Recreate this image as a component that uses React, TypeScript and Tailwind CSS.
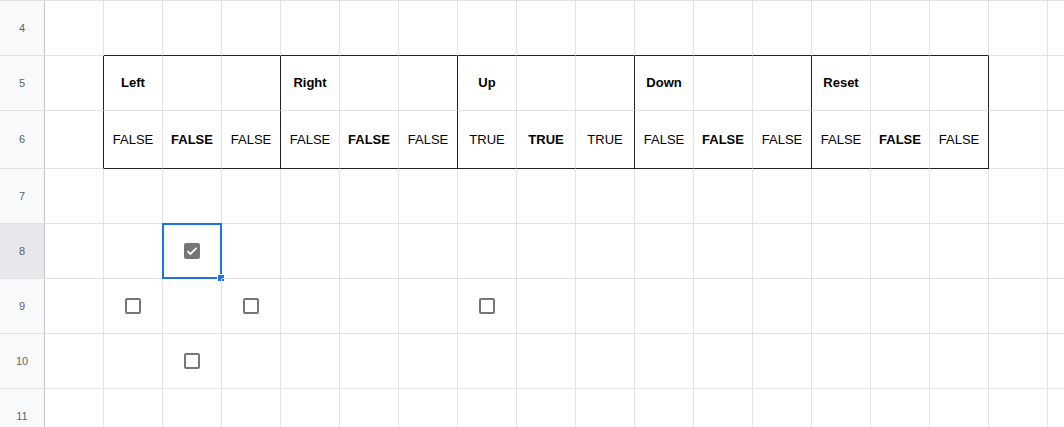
const COLS = 18;
const rowHeights: Record<number, number> = { 4: 55, 5: 55, 6: 58, 7: 55, 8: 55, 9: 55, 10: 55, 11: 55 };

const headers: Record<number, string> = { 1: "Left", 4: "Right", 7: "Up", 10: "Down", 13: "Reset" };
const values = [
  "FALSE", "FALSE", "FALSE",
  "FALSE", "FALSE", "FALSE",
  "TRUE", "TRUE", "TRUE",
  "FALSE", "FALSE", "FALSE",
  "FALSE", "FALSE", "FALSE",
];

// [row, col] -> checked
const checkboxes: Record<string, boolean> = {
  "8-2": true,
  "9-1": false,
  "9-3": false,
  "9-7": false,
  "10-2": false,
};

function Checkbox({ checked }: { checked: boolean }) {
  if (checked) {
    return (
      <div className="w-4 h-4 rounded-[2px] bg-[#767676] flex items-center justify-center">
        <svg width="16" height="16" viewBox="0 0 16 16" fill="none">
          <path d="M3.4 8.2 L6.4 11 L12.6 4.9" stroke="white" strokeWidth="1.8" />
        </svg>
      </div>
    );
  }
  return <div className="w-4 h-4 rounded-[2px] border-2 border-[#767676] bg-white" />;
}

function Cell({ row, col }: { row: number; col: number }) {
  const inTable = (row === 5 || row === 6) && col >= 1 && col <= 15;
  const blackRight = (row === 5 || row === 6) && [0, 3, 6, 9, 12, 15].includes(col);
  const blackBottom = (row === 4 || row === 6) && col >= 1 && col <= 15;
  const key = `${row}-${col}`;
  const selected = row === 8 && col === 2;

  let content: React.ReactNode = null;
  if (row === 5 && headers[col]) {
    content = <span className="font-bold">{headers[col]}</span>;
  } else if (row === 6 && inTable) {
    const v = values[col - 1];
    content = <span className={(col - 1) % 3 === 1 ? "font-bold" : ""}>{v}</span>;
  } else if (key in checkboxes) {
    content = <Checkbox checked={checkboxes[key]} />;
  }

  return (
    <div
      className={`relative shrink-0 w-[59px] flex items-center justify-center border-r border-b text-[13px] text-black ${
        blackRight ? "border-r-[#222]" : "border-r-[#e2e2e2]"
      } ${blackBottom ? "border-b-[#222]" : "border-b-[#e2e2e2]"}`}
    >
      {content}
      {selected && (
        <div className="absolute -left-px -top-px right-[-1px] bottom-[-1px] border-2 border-[#1a73e8]">
          <div className="absolute right-[-4px] bottom-[-4px] w-[6px] h-[6px] bg-[#1a73e8] border border-white box-content -m-px" />
        </div>
      )}
    </div>
  );
}

export default function App() {
  const rows = [4, 5, 6, 7, 8, 9, 10, 11];
  return (
    <div
      className="w-[1064px] h-[427px] overflow-hidden bg-white"
      style={{ fontFamily: '"Liberation Sans", Arial, sans-serif' }}
    >
      <div className="border-t border-[#e2e2e2]">
        {rows.map((r) => (
          <div key={r} className="flex" style={{ height: rowHeights[r] }}>
            <div
              className={`w-[45px] shrink-0 flex items-center justify-center border-r border-r-[#c4c7c5] border-b border-b-[#e2e2e2] text-[11px] text-[#5f6368] ${
                r === 8 ? "bg-[#e6e8eb]" : "bg-[#f8f9fa]"
              }`}
            >
              {r}
            </div>
            {Array.from({ length: COLS }, (_, c) => (
              <Cell key={c} row={r} col={c} />
            ))}
          </div>
        ))}
      </div>
    </div>
  );
}
